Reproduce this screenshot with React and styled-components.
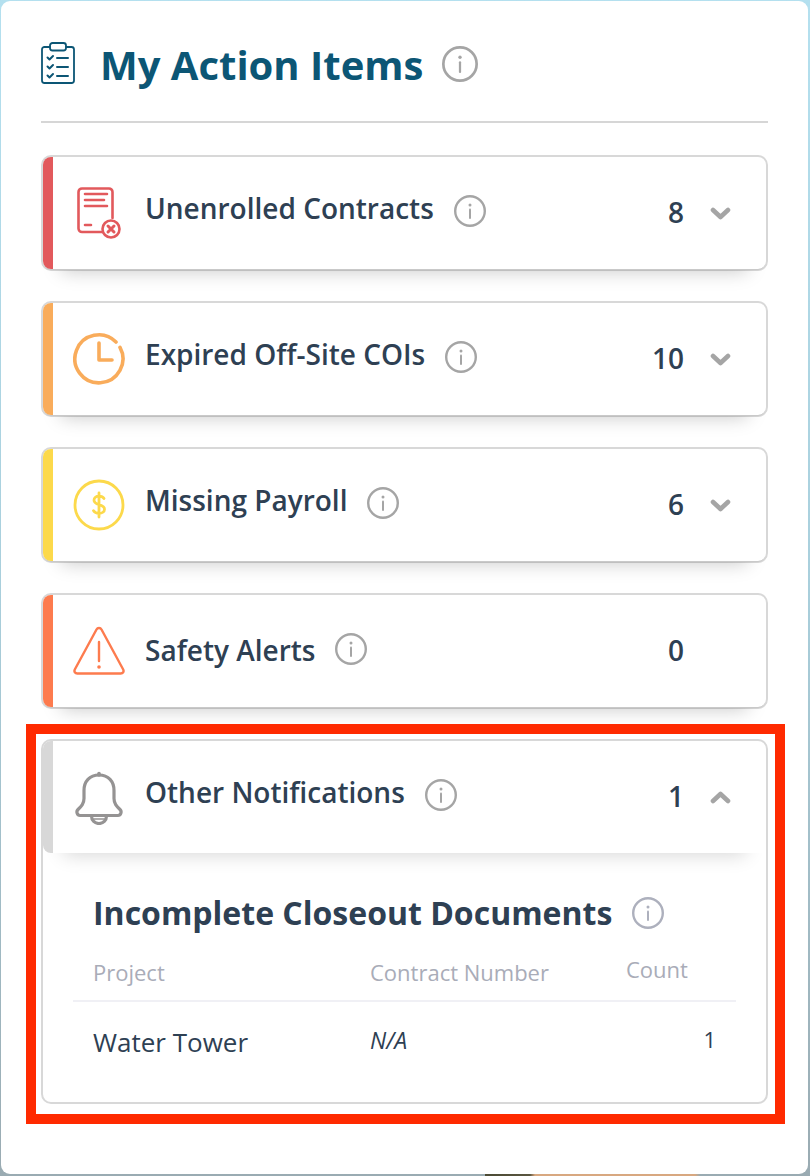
import React from "react";
import styled, { createGlobalStyle } from "styled-components";

const Global = createGlobalStyle`
  html, body { margin: 0; padding: 0; }
  body { font-family: "Open Sans", "Liberation Sans", sans-serif; overflow: hidden; }
`;

const Page = styled.div`
  position: relative;
  width: 810px;
  height: 1176px;
  box-sizing: border-box;
  padding: 1px 2px 2px 1px;
  background:
    linear-gradient(90deg, transparent 485px, #4b4a34 485px, #5a5640 530px, #d8a880 535px, #d8a880 695px, transparent 700px) 0 100% / 100% 2px no-repeat,
    linear-gradient(180deg, #b4e0ef 0%, #a9cfdc 50%, #9aabb2 100%);
`;

const Panel = styled.main`
  height: 100%;
  box-sizing: border-box;
  background: #fff;
  border-radius: 9px;
  padding: 0 40px;
`;

const Header = styled.header`
  height: 122px;
  box-sizing: border-box;
  display: flex;
  align-items: center;
  border-bottom: 2px solid #d6d6d6;
  margin-bottom: 32px;
  padding-top: 5px;
`;

const HeaderIcon = styled.svg`
  width: 34px;
  height: 42px;
  margin: -2px 25px 0 0;
  flex: none;
`;

const Title = styled.h1`
  margin: 2px 19px 0 0;
  font-size: 40px;
  line-height: 50px;
  font-weight: 700;
  color: #0c5675;
  white-space: nowrap;
`;

const CardList = styled.div`
  display: flex;
  flex-direction: column;
  gap: 30px;
`;

const Card = styled.section`
  border: 2px solid #d8d8d8;
  border-radius: 10px;
  background: #fff;
  box-sizing: border-box;
`;

const CardHead = styled.div`
  position: relative;
  height: 112px;
  display: flex;
  align-items: center;
  padding-right: 35px;
  border-radius: 8px;
  box-shadow: 0 2px 0 -1px #c9c9c9, 0 20px 18px -18px rgba(0, 0, 0, 0.22);
`;

const OpenHead = styled(CardHead)`
  box-shadow: 0 22px 18px -20px rgba(0, 0, 0, 0.16);
`;

const Bar = styled.span`
  align-self: stretch;
  width: 10px;
  flex: none;
  background: ${(p) => p.$color};
  border-radius: 8px 0 0 8px;
`;

const IconBox = styled.svg`
  width: 52px;
  height: 56px;
  margin: 0 20px 0 20px;
  flex: none;
`;

const Label = styled.span`
  font-size: 28px;
  line-height: 36px;
  font-weight: 600;
  color: #2e4053;
  white-space: nowrap;
  margin: ${(p) => (p.$low ? "-2px" : "-10px")} 20px 0 0;
`;

const Info = styled.svg`
  width: ${(p) => p.$size || 32}px;
  height: ${(p) => p.$size || 32}px;
  flex: none;
  color: ${(p) => p.$color || "#a5a5a5"};
`;

const HeadInfo = styled(Info)`
  margin-top: -4px;
`;

const Count = styled.span`
  margin-left: auto;
  margin-top: -2px;
  font-size: 28px;
  line-height: 36px;
  font-weight: 600;
  color: #2e4053;
  text-align: right;
`;

const Chevron = styled.svg`
  width: 21px;
  height: 13px;
  margin-left: 26px;
  flex: none;
  color: #a5a5a5;
  visibility: ${(p) => (p.$hidden ? "hidden" : "visible")};
`;

const Body = styled.div`
  padding: 39px 30px 0 30px;
  height: 249px;
  box-sizing: border-box;
`;

const SubTitleRow = styled.div`
  display: flex;
  align-items: center;
  padding-left: 20px;
  height: 42px;
`;

const SubTitle = styled.h2`
  margin: 0 20px 0 0;
  font-size: 32px;
  line-height: 42px;
  font-weight: 700;
  color: #2e4053;
  white-space: nowrap;
`;

const Table = styled.div`
  display: grid;
  grid-template-columns: 297px 256px 1fr;
  margin-top: 16px;
`;

const HeadCell = styled.div`
  height: 52px;
  box-sizing: border-box;
  border-bottom: 2px solid #f0f0f5;
  font-size: 22px;
  line-height: 30px;
  color: #a9acb8;
  white-space: nowrap;
  padding: ${(p) => (p.$raised ? "4px" : "7px")} 0 0 ${(p) => p.$pad || 0}px;
`;

const Cell = styled.div`
  font-size: ${(p) => p.$size || 26}px;
  line-height: 30px;
  color: #2e4053;
  font-style: ${(p) => (p.$italic ? "italic" : "normal")};
  text-align: ${(p) => (p.$right ? "right" : "left")};
  padding: ${(p) => p.$top || 0}px ${(p) => p.$padRight || 0}px 0 ${(p) => p.$pad || 0}px;
`;

const Highlight = styled.div`
  position: absolute;
  left: 26px;
  top: 724px;
  width: 759px;
  height: 400px;
  box-sizing: border-box;
  border: 10px solid #ff2a00;
  pointer-events: none;
`;

const InfoIcon = ({ as: C = Info, size = 32, color }) => (
  <C $size={size} $color={color} viewBox="0 0 32 32" fill="none" stroke="currentColor">
    <circle cx="16" cy="16" r="14.8" strokeWidth="2.4" />
    <path d="M16 14.5V23" strokeWidth="2" strokeLinecap="round" />
    <circle cx="16" cy="10" r="1.5" fill="currentColor" stroke="none" />
  </C>
);

const ContractIcon = () => (
  <IconBox viewBox="0 0 52 56" fill="none" stroke="#e2595c" strokeWidth="2.600" strokeLinecap="round" strokeLinejoin="round">
    <path d="M29 47H9a3.5 3.5 0 0 1-3.5-3.5V7A3.5 3.5 0 0 1 9 3.500h27a3.5 3.5 0 0 1 3.500 3.500V33" />
    <path d="M12 9h22M12 15h19M12 21h22M12 40h6" />
    <circle cx="38" cy="44" r="8.500" />
    <path d="M35 41l6 6M41 41l-6 6" strokeWidth="3" />
  </IconBox>
);

const ClockIcon = () => (
  <IconBox viewBox="0 0 52 56" fill="none" stroke="#f9ac5b" strokeWidth="3.600" strokeLinecap="round" strokeLinejoin="round">
    <path d="M43 11A24 24 0 1 0 47 16.400" />
    <path d="M26 12V29H39" />
  </IconBox>
);

const DollarIcon = () => (
  <IconBox viewBox="0 0 52 56" fill="none" stroke="#fcd94b" strokeWidth="2.800" strokeLinecap="round" strokeLinejoin="round">
    <circle cx="26" cy="28" r="24" />
    <path d="M26 16v24M31 21.500c-.8-1.400-2.700-2.300-5-2.300-3 0-5 1.700-5 4 0 5.500 10.500 3.500 10.500 9 0 2.500-2.400 4.200-5.500 4.200-2.500 0-4.600-1-5.500-2.700" />
  </IconBox>
);

const AlertIcon = () => (
  <IconBox viewBox="0 0 52 56" fill="none" stroke="#fd7b4e" strokeWidth="2.400" strokeLinecap="round" strokeLinejoin="round">
    <path d="M23.500 6.500L1.800 46.500c-1 2 .3 4 2.500 4h43.400c2.200 0 3.500-2 2.500-4L28.500 6.500c-1.100-2-3.900-2-5 0z" />
    <path d="M26 19v19" />
    <circle cx="26" cy="44" r="1.800" fill="#fd7b4e" stroke="none" />
  </IconBox>
);

const BellIcon = () => (
  <IconBox viewBox="0 0 52 56" fill="none" stroke="#959393" strokeWidth="3.200" strokeLinecap="round" strokeLinejoin="round">
    <path d="M26 6c-9.500 0-15 6.500-15 15.500v8c0 5-2.500 7.500-6 11-2.200 2.200-.8 6 2 6h38c2.800 0 4.200-3.800 2-6-3.500-3.500-6-6-6-11v-8C41 12.500 35.500 6 26 6z" />
    <path d="M26 4.500V6" strokeWidth="3.600" />
    <path d="M18.500 47c0 4.500 3.300 7.500 7.500 7.500s7.500-3 7.500-7.500" />
    <path d="M21 50h10" strokeWidth="1.600" />
  </IconBox>
);

const ChevronDown = () => (
  <Chevron viewBox="0 0 21 13" fill="none" stroke="currentColor" strokeWidth="4.600" strokeLinecap="round" strokeLinejoin="round">
    <path d="M3 3l7.500 7L18 3" />
  </Chevron>
);

const ChevronUp = () => (
  <Chevron viewBox="0 0 21 13" fill="none" stroke="currentColor" strokeWidth="4.600" strokeLinecap="round" strokeLinejoin="round">
    <path d="M3 10l7.500-7L18 10" />
  </Chevron>
);

const items = [
  { label: "Unenrolled Contracts", count: 8, color: "#e2595c", Icon: ContractIcon },
  { label: "Expired Off-Site COIs", count: 10, color: "#f9ac5b", Icon: ClockIcon },
  { label: "Missing Payroll", count: 6, color: "#fcd94b", Icon: DollarIcon },
  { label: "Safety Alerts", count: 0, color: "#fd7b4e", Icon: AlertIcon, low: true, noChevron: true },
];

export default function App() {
  return (
    <Page>
      <Global />
      <Panel>
        <Header>
          <HeaderIcon viewBox="0 0 34 42" fill="none" stroke="#0c5675" strokeWidth="1.800" strokeLinecap="round" strokeLinejoin="round">
            <path d="M9 5H3.500A2.500 2.500 0 0 0 1 7.500v31A2.500 2.500 0 0 0 3.500 41h27a2.500 2.500 0 0 0 2.500-2.500v-31A2.500 2.500 0 0 0 30.500 5H25" />
            <rect x="9" y="1" width="16" height="7.500" rx="2.500" />
            <path d="M6.500 15.500l2 2 3.500-3.500M6.500 24.500l2 2 3.500-3.500M6.500 33.500l2 2 3.500-3.500" strokeWidth="2" />
            <path d="M16 16h11M16 25h11M16 34h11" strokeWidth="2" />
          </HeaderIcon>
          <Title>My Action Items</Title>
          <InfoIcon size={36} />
        </Header>
        <CardList>
          {items.map(({ label, count, color, Icon, low, noChevron }) => (
            <Card key={label}>
              <CardHead>
                <Bar $color={color} />
                <Icon />
                <Label $low={low}>{label}</Label>
                <InfoIcon as={HeadInfo} />
                <Count>{count}</Count>
                {noChevron ? <Chevron $hidden /> : <ChevronDown />}
              </CardHead>
            </Card>
          ))}
          <Card>
            <OpenHead>
              <Bar $color="#d8d8d8" />
              <BellIcon />
              <Label>Other Notifications</Label>
              <InfoIcon as={HeadInfo} />
              <Count>1</Count>
              <ChevronUp />
            </OpenHead>
            <Body>
              <SubTitleRow>
                <SubTitle>Incomplete Closeout Documents</SubTitle>
                <InfoIcon color="#adb0bd" />
              </SubTitleRow>
              <Table>
                <HeadCell $pad={20}>Project</HeadCell>
                <HeadCell>Contract Number</HeadCell>
                <HeadCell $raised>Count</HeadCell>
                <Cell $pad={20} $top={25}>Water Tower</Cell>
                <Cell $italic $size={23} $top={23}>N/A</Cell>
                <Cell $right $size={22} $top={22} $padRight={20}>1</Cell>
              </Table>
            </Body>
          </Card>
        </CardList>
      </Panel>
      <Highlight />
    </Page>
  );
}
